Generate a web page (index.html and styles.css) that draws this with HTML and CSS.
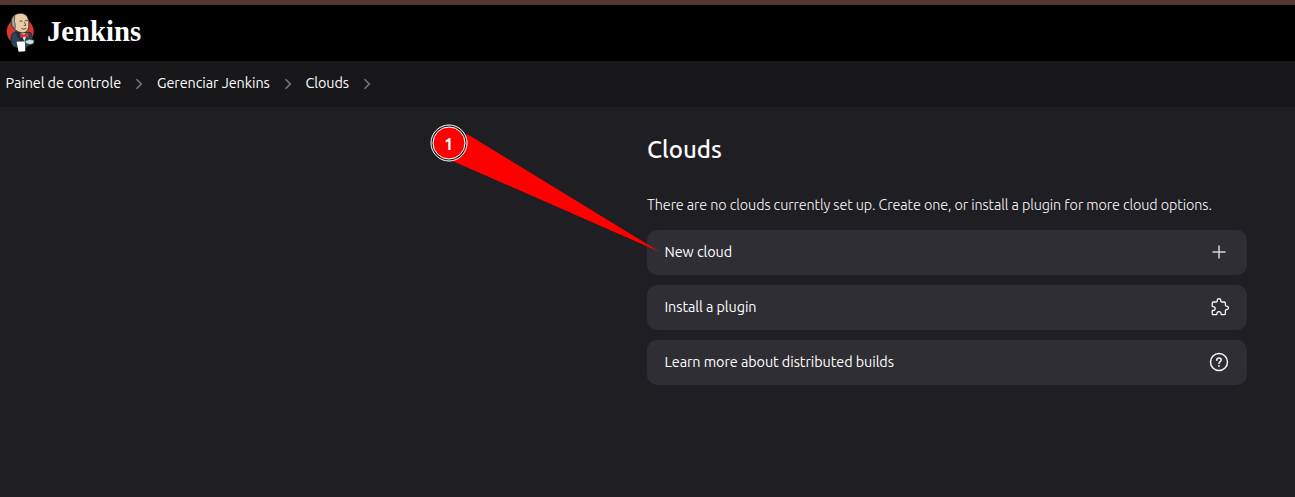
FILE: index.html
```html
<!DOCTYPE html>
<html lang="pt-BR">
<head>
<meta charset="utf-8">
<title>Clouds - Jenkins</title>
<link rel="stylesheet" href="styles.css">
</head>
<body>
<header class="header">
  <svg class="logo" width="30" height="42" viewBox="0 0 30 42" aria-hidden="true">
    <ellipse cx="14.700" cy="20" rx="14" ry="13.800" fill="#d33833"/>
    <path d="M9 20.500 Q5.500 22 5 27 Q5 33 7.500 35.500 L13 37 L20 37 L26 33 L27.500 26 L25.500 21Z" fill="#2c4659" stroke="#14212c" stroke-width=".8"/>
    <path d="M9.500 20 L12 26 L18 34 L21 25 L17 20Z" fill="#1b2e3c"/>
    <path d="M15 21.500 L19 30 L22 22Z" fill="#e8eef0"/>
    <path d="M6 13 Q4.500 4 11 1.800 Q18 -.5 22 4.500 Q24.500 9 23.500 15 Q23 20.500 17.500 21.500 Q12 21 9.500 18 Q6.500 17 6 13Z" fill="#e6cba6" stroke="#29231f" stroke-width=".8"/>
    <path d="M6 13 Q4.500 6 9 3 L8.800 7 Q8 10 9.500 12 L9.500 17 Q6.500 16 6 13Z" fill="#aaa69f" stroke="#302b28" stroke-width=".7"/>
    <path d="M14 9.500q1.500-1 3 0M19.500 9q1.500-1 3 0M19 10.500l1.500 3-2 .5M16 17q3 1.500 5-.5" fill="none" stroke="#493728" stroke-width=".9"/>
    <path d="M14 21.500l4.500 2 4.500-3 1 6-4.500-1.500-4.500 2z" fill="#d33833" stroke="#6d1815" stroke-width=".5"/>
    <path d="M20 30.500 Q20 28 22.500 29 Q24 27 26 28.500 L29 29 L28.500 32.500 L25 33.500 L21 32.500Z" fill="#d5dee2" stroke="#344b59" stroke-width=".7"/>
    <path d="M11 30.500 L19.500 30 L20 40.500 L13 41Z" fill="#fff"/>
  </svg>
  <span class="wordmark">Jenkins</span>
</header>
<nav class="breadcrumbs">
  <span class="crumb crumb-panel">Painel de controle</span>
  <svg class="chevron" width="8" height="12" viewBox="0 0 8 12"><path d="M1.500 1.200 6.300 6 1.500 10.800"/></svg>
  <span class="crumb crumb-manage">Gerenciar Jenkins</span>
  <svg class="chevron" width="8" height="12" viewBox="0 0 8 12"><path d="M1.500 1.200 6.300 6 1.500 10.800"/></svg>
  <span class="crumb crumb-clouds">Clouds</span>
  <svg class="chevron" width="8" height="12" viewBox="0 0 8 12"><path d="M1.500 1.200 6.300 6 1.500 10.800"/></svg>
</nav>
<main class="content">
  <h1 class="title">Clouds</h1>
  <p class="intro">There are no clouds currently set up. Create one, or install a plugin for more cloud options.</p>
  <div class="actions">
    <a class="action"><span class="label">New cloud</span>
      <svg class="icon" width="20" height="20" viewBox="0 0 20 20"><path d="M10 4v12M4 10h12" stroke="#d6d6d9"/></svg></a>
    <a class="action"><span class="label">Install a plugin</span>
      <svg class="icon icon-plugin" width="20" height="20" viewBox="0 0 20 20"><path d="M4.500 5h2.700c.8 0 1-.4 1-1.100C8.200 2.600 8.900 1.700 10 1.700s1.800.9 1.800 2.200c0 .7.200 1.100 1 1.100h2.400c.8 0 1.200.4 1.200 1.200v1.900c0 .8.300 1.100 1 1.100 1.200 0 2 .7 2 1.700s-.8 1.700-2 1.700c-.7 0-1 .3-1 1.100v2.800c0 .8-.4 1.200-1.200 1.200h-2.400c-.4 0-.7-.3-.7-.8 0-1.500-.8-2.300-2.100-2.300s-2.100.8-2.100 2.300c0 .5-.3.800-.7.800H4.500c-.8 0-1.300-.4-1.300-1.200v-2.200c0-.5.300-.8.800-.8 1.300 0 2.200-.7 2.200-1.900S5.300 9.700 4 9.700c-.5 0-.8-.3-.8-.8V6.200C3.200 5.400 3.700 5 4.500 5Z"/></svg></a>
    <a class="action"><span class="label">Learn more about distributed builds</span>
      <svg class="icon" width="20" height="20" viewBox="0 0 20 20"><circle cx="10" cy="10" r="8.500"/><path d="M7.800 8.200c0-1.300 1-2.100 2.200-2.100s2.200.8 2.200 2c0 1.500-2.200 1.700-2.200 3.400"/><circle cx="10" cy="14" r=".9" fill="#f7f7f8" stroke="none"/></svg></a>
  </div>
</main>
<svg class="callout" width="236" height="140" viewBox="0 0 236 140">
  <path d="M37 14 230 132 18 39Z" fill="#f00"/>
  <circle cx="19" cy="23" r="18" fill="#222" stroke="#fff" stroke-width="1"/>
  <circle cx="19" cy="23" r="16" fill="#f00" stroke="#fff" stroke-width="1"/>
  <text x="18.700" y="29.500" text-anchor="middle">1</text>
</svg>
</body>
</html>
```
FILE: styles.css
```css
* { box-sizing: border-box; }
body {
  margin: 0;
  height: 497px;
  overflow: hidden;
  background: #1f1e23;
  color: #fff;
  font-family: Ubuntu, "Noto Sans", sans-serif;
}
.header {
  height: 61px;
  display: flex;
  align-items: flex-start;
  gap: 12px;
  padding: 7px 6px 0;
  border-top: 5px solid #533532;
  background: #000;
}
.logo { width: 29px; height: 41px; }
.wordmark {
  font: bold 28.7px/38px "Liberation Serif", serif;
}
.breadcrumbs {
  height: 46px;
  display: flex;
  align-items: center;
  padding: 0 5.5px 3px;
  background: #18181a;
  font-size: 14.400px;
  white-space: nowrap;
}
.crumb, .label { font-weight: 450; letter-spacing: -.07px; }
.crumb-panel { width: 129.500px; }
.crumb-manage { width: 126.500px; }
.crumb-clouds { width: 57.500px; }
.chevron {
  margin: 3px 14px 0 0;
  fill: none;
  stroke: #77777b;
  stroke-width: 1.600;
}
.content { margin-left: 647px; width: 600px; padding-top: 26px; white-space: nowrap; }
.title { margin: 0; height: 34px; font-size: 24px; line-height: 34px; font-weight: 550; }
.intro { margin: 26px 0 0; height: 24px; font-size: 14.400px; line-height: 24px; font-weight: 300; letter-spacing: -.09px; }
.actions { display: grid; gap: 10px; margin-top: 13px; }
.action {
  height: 45px;
  display: flex;
  align-items: center;
  justify-content: space-between;
  padding: 0 18px 2px 17.5px;
  border-radius: 10px;
  background: #2f2e34;
  font-size: 14.400px;
}
.icon { fill: none; stroke: #f7f7f8; stroke-width: 1.500; stroke-linejoin: round; stroke-linecap: round; }
.icon-plugin { stroke-width: 1.300; }
.callout { position: absolute; left: 430px; top: 120px; }
.callout text { font: bold 16px Ubuntu, "Noto Sans", sans-serif; fill: #fff; }
```
